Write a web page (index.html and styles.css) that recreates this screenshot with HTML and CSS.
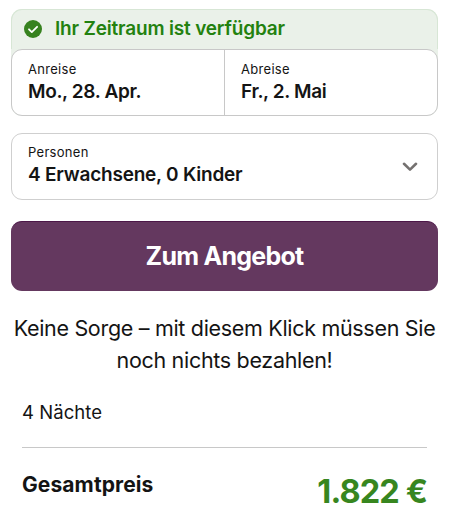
FILE: index.html
```html
<!DOCTYPE html>
<html lang="de">
<head>
<meta charset="utf-8">
<title>Buchung</title>
<link rel="stylesheet" href="styles.css">
</head>
<body>
<main class="booking">
  <section class="period">
    <div class="status">
      <svg class="check" viewBox="0 0 18 18"><circle cx="9" cy="9" r="9"/><path d="M5 9.300l2.800 2.800 5.300-5.300"/></svg>
      <span>Ihr Zeitraum ist verfügbar</span>
    </div>
    <div class="dates">
      <div class="field"><span class="label">Anreise</span><span class="value date">Mo., 28. Apr.</span></div>
      <div class="field"><span class="label">Abreise</span><span class="value date">Fr., 2. Mai</span></div>
    </div>
  </section>
  <section class="persons">
    <div><span class="label">Personen</span><span class="value">4 Erwachsene, 0 Kinder</span></div>
    <svg class="chevron" viewBox="0 0 16 10"><path d="M2 1.800L8 7.600l6-5.800"/></svg>
  </section>
  <button class="cta" type="button">Zum Angebot</button>
  <p class="note">Keine Sorge – mit diesem Klick müssen Sie<br>noch nichts bezahlen!</p>
  <section class="summary">
    <div class="nights">4 Nächte</div>
    <div class="total"><span class="total-label">Gesamtpreis</span><span class="price">1.822 €</span></div>
  </section>
</main>
</body>
</html>
```
FILE: styles.css
```css
* { box-sizing: border-box; }
body {
  margin: 0;
  background: #fff;
  color: #141414;
  font-family: Inter, "Liberation Sans", sans-serif;
}
.booking { padding: 9px 12px 0 11px; }
.period {
  height: 107px;
  border-radius: 11px;
  background: #eaf1e9;
}
.status {
  display: flex;
  align-items: center;
  height: 40px;
  padding: 0 0 2px 12px;
  gap: 13px;
  border: 1px solid #d7e6d5;
  border-bottom: 0;
  border-radius: 11px 11px 0 0;
  color: #23810f;
  font-size: 19px;
  line-height: 25px;
  letter-spacing: -0.18px;
  font-weight: 600;
}
.check { width: 18px; height: 18px; fill: #37821f; }
.check path { fill: none; stroke: #fff; stroke-width: 1.800; stroke-linecap: round; stroke-linejoin: round; }
.dates {
  display: grid;
  grid-template-columns: 212px 1fr;
  height: 67px;
  border: 1px solid #c8c8c8;
  border-radius: 11px;
  background: #fff;
}
.field { padding: 10px 16px 0; }
.field + .field { border-left: 1px solid #c8c8c8; }
.label { display: block; font-size: 13px; line-height: 18px; letter-spacing: 0.3px; }
.value { display: block; font-size: 19px; line-height: 28px; font-weight: 600; letter-spacing: -0.22px; }
.date { letter-spacing: -0.35px; }
.persons {
  display: flex;
  justify-content: space-between;
  height: 67px;
  margin-top: 17px;
  padding: 9px 19px 0 16px;
  border: 1px solid #cfcfcf;
  border-radius: 11px;
}
.chevron { width: 16px; height: 10px; margin-top: 19px; fill: none; stroke: #747170; stroke-width: 2.600; stroke-linecap: round; stroke-linejoin: round; }
.cta {
  display: block;
  width: 100%;
  height: 70px;
  margin-top: 21px;
  padding: 0 0 2px;
  border: 0;
  border-top: 1px solid #4c1748;
  border-radius: 11px;
  background: #64385f;
  color: #fff;
  font: 700 25px Inter, sans-serif;
  letter-spacing: -0.75px;
}
.note {
  margin: 21px -10px 0;
  font-size: 21.500px;
  line-height: 32px;
  letter-spacing: -0.31px;
  text-align: center;
}
.summary { padding: 23px 11px 0; }
.nights { height: 49px; border-bottom: 1px solid #c8c8c8; font-size: 18.500px; line-height: 27px; letter-spacing: 0.05px; }
.total { display: flex; justify-content: space-between; }
.total-label { padding-top: 24px; font-size: 21px; line-height: 26px; font-weight: 700; letter-spacing: 0.1px; }
.price { padding-top: 24px; color: #37861f; font-size: 32.500px; line-height: 40px; font-weight: 700; letter-spacing: -0.9px; }
```
